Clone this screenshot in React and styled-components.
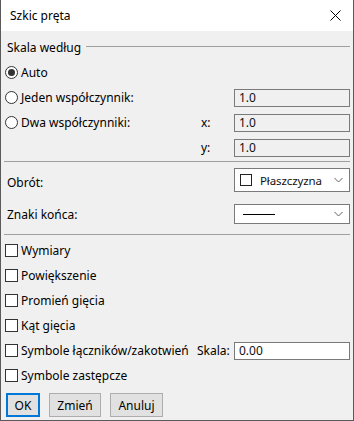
import React from "react";
import styled, { createGlobalStyle } from "styled-components";

const Global = createGlobalStyle`
  html, body { margin: 0; padding: 0; background: #f0f0f0; }
  body { font-family: "Noto Sans", "Open Sans", sans-serif; font-size: 12px; color: #000; }
  * { box-sizing: border-box; }
`;

const Window = styled.div`
  width: 354px;
  height: 421px;
  display: flex;
  flex-direction: column;
  background: #f0f0f0;
  border-left: 1px solid #5a5a5a;
  border-right: 1px solid #5a5a5a;
  border-bottom: 1px solid #5a5a5a;
`;

const TitleBar = styled.div`
  height: 31px;
  flex: none;
  background: #fff;
  display: flex;
  align-items: center;
  justify-content: space-between;
  padding: 0 12px 0 9px;
`;

const Title = styled.span`
  font-size: 12px;
  line-height: 16px;
`;

const Body = styled.div`
  padding: 4px 3px 0 3px;
  display: flex;
  flex-direction: column;
`;

const Row = styled.div`
  height: ${(p) => p.h || 25}px;
  margin-top: ${(p) => p.mt || 0}px;
  display: flex;
  align-items: center;
`;

const GroupTitle = styled.span`
  padding-left: 3px;
  white-space: nowrap;
`;

const GroupLine = styled.div`
  flex: 1;
  height: 1px;
  background: #a0a0a0;
  margin-left: 5px;
  margin-top: -3px;
`;

const Separator = styled.div`
  height: 1px;
  background: #a0a0a0;
  margin-top: ${(p) => p.mt || 0}px;
  flex: none;
`;

const Label = styled.span`
  flex: 1;
  white-space: nowrap;
  padding-left: ${(p) => p.pl || 0}px;
  margin-top: ${(p) => p.dy || 0}px;
`;

const SubLabel = styled.span`
  width: ${(p) => p.w}px;
  white-space: nowrap;
`;

const Field = styled.div`
  width: 116px;
  height: 18px;
  border: 1px solid #7a7a7a;
  background: ${(p) => (p.white ? "#fff" : "#f0f0f0")};
  display: flex;
  align-items: center;
  padding-left: 4px;
  font-size: 12px;
  color: #111;
`;

const RadioWrap = styled.label`
  display: flex;
  align-items: center;
  flex: 1;
  white-space: nowrap;
`;

const RadioCircle = styled.span`
  width: 13px;
  height: 13px;
  border-radius: 50%;
  border: 1px solid #333;
  background: #fff;
  display: flex;
  align-items: center;
  justify-content: center;
  margin: 0 3px 0 1px;
  flex: none;
  &::after {
    content: "";
    width: 7px;
    height: 7px;
    border-radius: 50%;
    background: ${(p) => (p.checked ? "#333" : "transparent")};
  }
`;

const CheckWrap = styled.label`
  display: flex;
  align-items: center;
  flex: 1;
  white-space: nowrap;
`;

const CheckBox = styled.span`
  width: 13px;
  height: 13px;
  border: 1px solid #333;
  background: #fff;
  margin: 0 3px 0 1px;
  flex: none;
`;

const Dropdown = styled.div`
  width: 116px;
  height: ${(p) => p.h}px;
  border: 1px solid #7a7a7a;
  background: #fff;
  display: flex;
  align-items: center;
  padding: 0 6px 0 5px;
`;

const DropCheck = styled.span`
  width: 12px;
  height: 12px;
  border: 1px solid #222;
  margin-right: 8px;
  flex: none;
`;

const DropText = styled.span`
  flex: 1;
  white-space: nowrap;
  color: #111;
  font-size: 11.5px;
  letter-spacing: -0.1px;
`;

const LineSample = styled.span`
  width: 32px;
  height: 1px;
  background: #000;
  margin-left: 3px;
`;

const Spacer = styled.span`
  flex: 1;
`;

const ButtonBar = styled.div`
  display: flex;
  gap: 9px;
  padding-left: 2px;
  margin-top: 5px;
`;

const Button = styled.button`
  width: ${(p) => p.w}px;
  height: 24px;
  font-family: inherit;
  font-size: 12px;
  color: #000;
  background: #e1e1e1;
  border: ${(p) => (p.primary ? "2px solid #0078d7" : "1px solid #adadad")};
  padding: 0;
  display: flex;
  align-items: center;
  justify-content: center;
`;

const Chevron = () => (
  <svg width="9" height="6" viewBox="0 0 9 6">
    <path d="M0.5 1 L4.5 5 L8.5 1" fill="none" stroke="#606060" strokeWidth="1" />
  </svg>
);

const CloseIcon = () => (
  <svg width="11" height="11" viewBox="0 0 11 11">
    <path d="M0.5 0.5 L10.5 10.5 M10.5 0.5 L0.5 10.5" stroke="#000" strokeWidth="1" />
  </svg>
);

const Radio = ({ checked, children }) => (
  <RadioWrap>
    <RadioCircle checked={checked} />
    {children}
  </RadioWrap>
);

const Check = ({ children }) => (
  <CheckWrap>
    <CheckBox />
    {children}
  </CheckWrap>
);

export default function App() {
  return (
    <>
      <Global />
      <Window>
        <TitleBar>
          <Title>Szkic pręta</Title>
          <CloseIcon />
        </TitleBar>
        <Body>
          <Row>
            <GroupTitle>Skala według</GroupTitle>
            <GroupLine />
          </Row>
          <Row>
            <Radio checked>Auto</Radio>
          </Row>
          <Row>
            <Radio>Jeden współczynnik:</Radio>
            <Field>1.0</Field>
          </Row>
          <Row>
            <Radio>Dwa współczynniki:</Radio>
            <SubLabel w={33}>x:</SubLabel>
            <Field>1.0</Field>
          </Row>
          <Row>
            <Spacer />
            <SubLabel w={33}>y:</SubLabel>
            <Field>1.0</Field>
          </Row>
          <Separator mt={1} />
          <Row h={36}>
            <Label pl={3} dy={4}>Obrót:</Label>
            <Dropdown h={24}>
              <DropCheck />
              <DropText>Płaszczyzna</DropText>
              <Chevron />
            </Dropdown>
          </Row>
          <Row h={32}>
            <Label pl={3} dy={1}>Znaki końca:</Label>
            <Dropdown h={20}>
              <LineSample />
              <Spacer />
              <Chevron />
            </Dropdown>
          </Row>
          <Separator mt={4} />
          <Row mt={3}>
            <Check>Wymiary</Check>
          </Row>
          <Row>
            <Check>Powiększenie</Check>
          </Row>
          <Row>
            <Check>Promień gięcia</Check>
          </Row>
          <Row>
            <Check>Kąt gięcia</Check>
          </Row>
          <Row>
            <Check>Symbole łączników/zakotwień</Check>
            <SubLabel w={37}>Skala:</SubLabel>
            <Field white>0.00</Field>
          </Row>
          <Row>
            <Check>Symbole zastępcze</Check>
          </Row>
          <ButtonBar>
            <Button primary w={34}>OK</Button>
            <Button w={52}>Zmień</Button>
            <Button w={53}>Anuluj</Button>
          </ButtonBar>
        </Body>
      </Window>
    </>
  );
}
